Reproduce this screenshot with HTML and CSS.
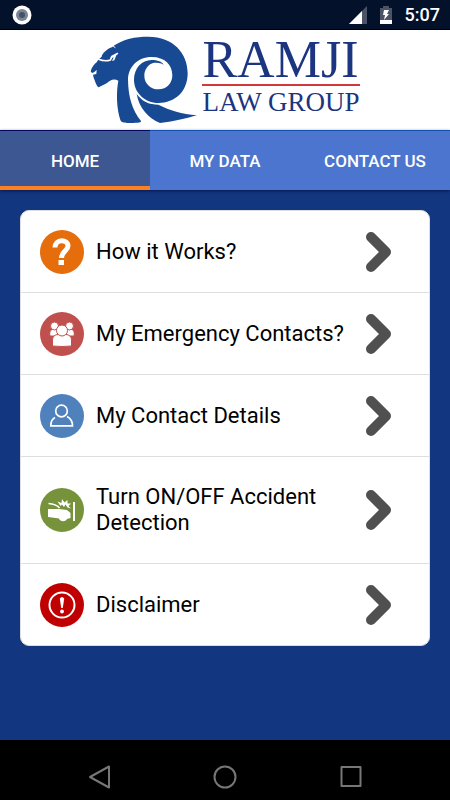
FILE: index.html
```html
<!DOCTYPE html>
<html lang="en">
<head>
    <meta charset="UTF-8">
    <meta name="viewport" content="width=device-width, initial-scale=1.0">
    <title>Ramji Law Group</title>
    <link rel="stylesheet" href="styles.css">
</head>
<body>
    <div class="status-bar">
        <svg class="status-dot" width="20" height="20" viewBox="0 0 20 20">
            <circle cx="10" cy="10" r="9.5" fill="#fff"/>
            <circle cx="10" cy="10" r="6" fill="#7b8494"/>
            <circle cx="10" cy="10" r="3" fill="#465166"/>
        </svg>
        <div class="status-right">
            <svg width="18" height="18" viewBox="0 0 18 18">
                <path d="M18 0V18H0Z" fill="#4a5368"/>
                <path d="M13 5V18H0Z" fill="#fff"/>
            </svg>
            <svg width="12" height="18" viewBox="0 0 12 18">
                <path d="M3 0H9V2H12V18H0V2H3Z" fill="#4a5368"/>
                <path d="M0 14H12V18H0Z" fill="#fff"/>
                <path d="M4 4H9L7 8H9L4 14L5 9H3Z" fill="#fff"/>
            </svg>
            <span class="time">5:07</span>
        </div>
    </div>

    <header class="header">
        <svg class="logo-mark" width="108" height="88" viewBox="30 18 324 264">
            <path fill="#174a93" d="M100 48C130 27 165 20 205 20C280 20 323 70 323 130C323 185 285 219 235 219C195 219 162 188 162 150C162 115 185 90 215 90C232 90 246 95 251 104C242 98 230 98 222 98C203 102 193 120 193 137C193 161 212 178 236 178C260 178 277 160 277 136C277 105 255 81 215 81C172 81 144 112 144 150C145 200 156 240 183 273C184 277 178 279 150 279C130 279 124 277 121 270C110 235 108 190 115 152C100 143 88 153 80 160L56 172C49 168 45 152 41 143L39 134L49 132L50 120L42 127L36 129L32 124C36 110 43 102 50 97L56 88L65 80C67 70 78 61 88 55L97 51Z"/>
            <path fill="#174a93" d="M170 192C188 216 208 224 235 224C270 242 305 251 351 256C320 265 285 274 240 279C205 265 178 235 170 192Z"/>
            <path fill="none" stroke="#fff" stroke-width="5" d="M54 87C68 93 80 94 91 90L96 79L114 70"/>
            <path fill="#fff" d="M92 80L114 69C108 74 107 82 103 91L96 93L101 82L92 85Z"/>
            <path fill="none" stroke="#fff" stroke-width="3" d="M99 48L106 53"/>
        </svg>
        <div class="logo-text">
            <span class="logo-name">RAMJI</span>
            <span class="logo-sub">LAW GROUP</span>
        </div>
    </header>

    <nav class="tabs">
        <a href="#home" class="tab active">HOME</a>
        <a href="#data" class="tab">MY DATA</a>
        <a href="#contact" class="tab">CONTACT US</a>
    </nav>

    <main class="content">
        <div class="menu">
            <a href="#how" class="menu-item">
                <svg class="menu-icon" viewBox="0 0 44 44">
                    <circle cx="22" cy="22" r="22" fill="#e56d0b"/>
                    <path d="M15 17.500C15 8.500 28 9 28 16C28 21 21.500 21 21.500 28" fill="none" stroke="#fff" stroke-width="5"/>
                    <rect x="18.500" y="30" width="5.500" height="5" fill="#fff"/>
                </svg>
                <span class="menu-label">How it Works?</span>
                <svg class="chevron" viewBox="0 0 26 40"><path d="M5 5L20 20L5 35"/></svg>
            </a>
            <a href="#emergency" class="menu-item">
                <svg class="menu-icon" viewBox="0 0 44 44">
                    <circle cx="22" cy="22" r="22" fill="#c0504d"/>
                    <g fill="#fff" stroke="#c0504d" stroke-width="1">
                        <path d="M10 24C9 19 11 17 15 17H18V24Z"/>
                        <path d="M34 24C35 19 33 17 29 17H26V24Z"/>
                        <circle cx="14.500" cy="14" r="4"/>
                        <circle cx="29.500" cy="14" r="4"/>
                        <path d="M12.500 34V28C12.500 24.500 15 22.500 18 22.500H26C29 22.500 31.500 24.500 31.500 28V34Q22 35 12.500 34Z"/>
                        <circle cx="22" cy="18.500" r="5.500"/>
                    </g>
                </svg>
                <span class="menu-label">My Emergency Contacts?</span>
                <svg class="chevron" viewBox="0 0 26 40"><path d="M5 5L20 20L5 35"/></svg>
            </a>
            <a href="#details" class="menu-item">
                <svg class="menu-icon" viewBox="0 0 44 44">
                    <circle cx="22" cy="22" r="22" fill="#4f81bd"/>
                    <g fill="none" stroke="#fff" stroke-width="1.700">
                        <circle cx="21.500" cy="17" r="5.800"/>
                        <path d="M15 23.500C12 25 10.800 28 10.800 31.800H32.500C32.500 28 31 24.500 27 22.500"/>
                    </g>
                </svg>
                <span class="menu-label">My Contact Details</span>
                <svg class="chevron" viewBox="0 0 26 40"><path d="M5 5L20 20L5 35"/></svg>
            </a>
            <a href="#detection" class="menu-item">
                <svg class="menu-icon" viewBox="0 0 44 44">
                    <circle cx="22" cy="22" r="22" fill="#76933c"/>
                    <path d="M8 21H19L27 22L30.500 25V30L27 31C25.500 34 20 34 19 30.500L8 29Z" fill="#fff"/>
                    <path d="M8.500 15.500Q16 16 19.500 20" fill="none" stroke="#fff" stroke-width="1.500"/>
                    <path d="M20.500 18L17.500 13.500L21.500 15L22 11L24.500 14.500L27.500 12L27.500 15.500L31 15.500L28.500 18L31 20.500L27.500 19.500L25.500 16.500L24 19L22 16.500Z" fill="#fff"/>
                    <rect x="33" y="14" width="2" height="19" fill="#fff"/>
                </svg>
                <span class="menu-label">Turn ON/OFF Accident Detection</span>
                <svg class="chevron" viewBox="0 0 26 40"><path d="M5 5L20 20L5 35"/></svg>
            </a>
            <a href="#disclaimer" class="menu-item">
                <svg class="menu-icon" viewBox="0 0 44 44">
                    <circle cx="22" cy="22" r="22" fill="#c00000"/>
                    <circle cx="22" cy="22" r="12.500" fill="none" stroke="#fff" stroke-width="2"/>
                    <path d="M19.800 15.500Q22 12.500 24.200 15.500L22.800 25H21.200Z" fill="#fff"/>
                    <circle cx="22" cy="28.500" r="1.900" fill="#fff"/>
                </svg>
                <span class="menu-label">Disclaimer</span>
                <svg class="chevron" viewBox="0 0 26 40"><path d="M5 5L20 20L5 35"/></svg>
            </a>
        </div>
    </main>

    <footer class="nav-bar">
        <button type="button" class="nav-btn" aria-label="Back">
            <svg width="24" height="24" viewBox="0 0 24 24"><path d="M22 1.500V22.500L3 12Z"/></svg>
        </button>
        <button type="button" class="nav-btn" aria-label="Home">
            <svg width="24" height="24" viewBox="0 0 24 24"><circle cx="12" cy="12" r="10.500"/></svg>
        </button>
        <button type="button" class="nav-btn" aria-label="Recent apps">
            <svg width="24" height="24" viewBox="0 0 24 24"><rect x="2.500" y="2" width="19" height="19"/></svg>
        </button>
    </footer>
</body>
</html>
```
FILE: styles.css
```css
* {
    margin: 0;
    padding: 0;
    box-sizing: border-box;
}

body {
    display: flex;
    flex-direction: column;
    min-height: 100vh;
    font-family: Roboto, Arial, sans-serif;
    background: #123680;
}

svg {
    display: block;
    flex-shrink: 0;
}

/* Status bar */
.status-bar {
    display: flex;
    align-items: center;
    justify-content: space-between;
    height: 30px;
    padding: 0 10px 0 12px;
    background: #03112b;
    border-bottom: 1px solid #000;
}

.status-right {
    display: flex;
    align-items: center;
    gap: 13px;
}

.time {
    color: #fff;
    font-size: 18px;
    font-weight: 500;
}

/* Logo */
.header {
    display: flex;
    align-items: center;
    justify-content: center;
    gap: 4px;
    height: 100px;
    background: #fff;
}

.logo-text {
    display: flex;
    flex-direction: column;
    padding-bottom: 6px;
    font-family: "Liberation Serif", serif;
    color: #1c3580;
}

.logo-name {
    font-size: 52px;
    line-height: 48px;
    border-bottom: 2px solid #d5383b;
}

.logo-sub {
    font-size: 27px;
    line-height: 32px;
}

/* Tabs */
.tabs {
    display: flex;
    height: 60px;
    background: #4b75ce;
    box-shadow: 0 1px 3px rgba(0, 0, 40, 0.6);
}

.tab {
    flex: 1;
    display: flex;
    align-items: center;
    justify-content: center;
    border-top: 1px solid #1450b0;
    color: #fff;
    font-size: 17px;
    font-weight: 500;
    text-decoration: none;
}

.tab.active {
    background: #3d5792;
    border-top-color: #000860;
    box-shadow: inset 0 -4px #ff8020;
}

/* Menu */
.content {
    flex: 1;
    padding: 20px;
}

.menu {
    background: #fff;
    border: 1px solid #dedede;
    border-radius: 9px;
    overflow: hidden;
}

.menu-item {
    display: flex;
    align-items: center;
    min-height: 81px;
    padding: 27px 37px 27px 19px;
    color: #000;
    text-decoration: none;
}

.menu-item + .menu-item {
    min-height: 82px;
    border-top: 1px solid #dedede;
}

.menu-icon {
    width: 44px;
    height: 44px;
    margin: -10px 12px -10px 0;
}

.menu-label {
    flex: 1;
    font-size: 22px;
    line-height: 26px;
}

.chevron {
    width: 26px;
    height: 40px;
    margin: -10px 0;
}

.chevron path {
    fill: none;
    stroke: #505050;
    stroke-width: 10;
    stroke-linecap: round;
    stroke-linejoin: round;
}

/* Bottom navigation */
.nav-bar {
    display: flex;
    align-items: center;
    justify-content: center;
    gap: 78px;
    height: 60px;
    padding-top: 13px;
    background: #000;
}

.nav-btn {
    display: flex;
    justify-content: center;
    width: 48px;
    background: none;
    border: none;
}

.nav-btn svg {
    fill: none;
    stroke: #777;
    stroke-width: 2;
    stroke-linejoin: round;
}
```
